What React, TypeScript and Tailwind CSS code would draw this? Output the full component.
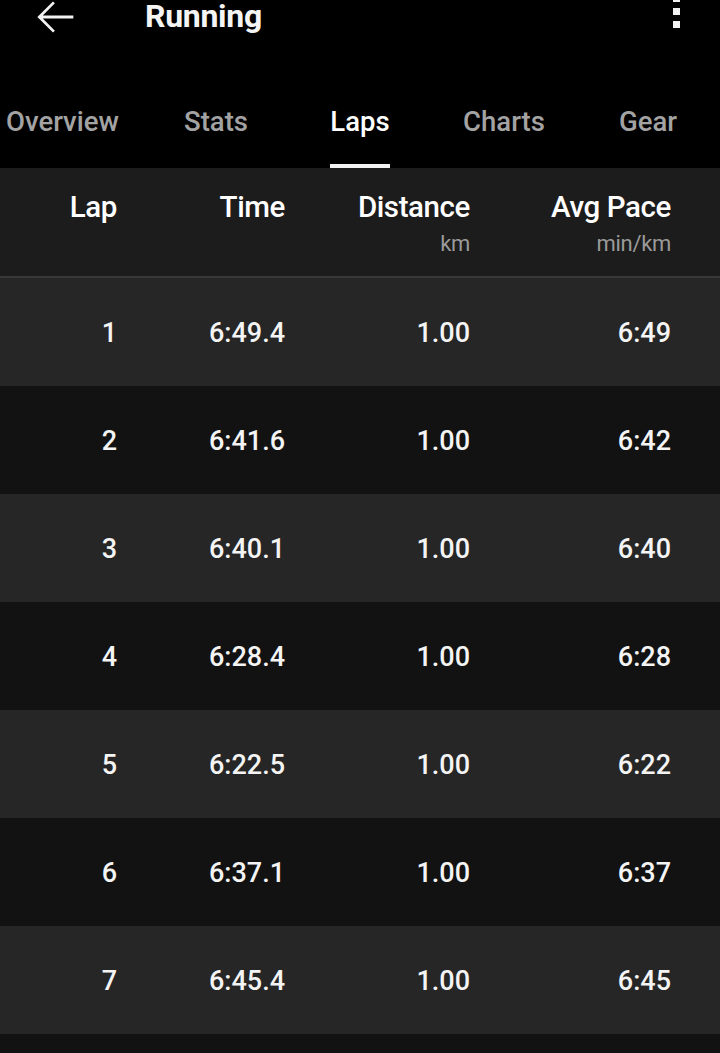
import React from 'react';

type Lap = { lap: number; time: string; distance: string; pace: string };

const laps: Lap[] = [
  { lap: 1, time: '6:49.4', distance: '1.00', pace: '6:49' },
  { lap: 2, time: '6:41.6', distance: '1.00', pace: '6:42' },
  { lap: 3, time: '6:40.1', distance: '1.00', pace: '6:40' },
  { lap: 4, time: '6:28.4', distance: '1.00', pace: '6:28' },
  { lap: 5, time: '6:22.5', distance: '1.00', pace: '6:22' },
  { lap: 6, time: '6:37.1', distance: '1.00', pace: '6:37' },
  { lap: 7, time: '6:45.4', distance: '1.00', pace: '6:45' },
];

const tabs = ['Overview', 'Stats', 'Laps', 'Charts', 'Gear'];

const font = { fontFamily: 'Roboto, "Noto Sans", sans-serif' };

const cols = 'grid grid-cols-[117px_168px_185px_201px]';

const ArrowBack = () => (
  <svg width="52" height="52" viewBox="0 0 24 24" className="shrink-0">
    <path
      d="M20 11.3H5.9l5.6-5.6L10.6 4.8 3.4 12l7.2 7.2.9-.9-5.6-5.6H20z"
      fill="#f2f2f2"
    />
  </svg>
);

const Kebab = () => (
  <div className="flex flex-col gap-[6px] items-center -mt-[10px]">
    <span className="block w-[7px] h-[7px] bg-[#f2f2f2]" />
    <span className="block w-[7px] h-[7px] bg-[#f2f2f2]" />
    <span className="block w-[7px] h-[7px] bg-[#f2f2f2]" />
  </div>
);

export default function App() {
  return (
    <div className="w-[720px] h-[1053px] overflow-hidden bg-black text-white" style={font}>
      {/* top bar */}
      <div className="h-[33px] flex items-center">
        <div className="ml-[30px] w-[52px] flex items-center justify-center">
          <ArrowBack />
        </div>
        <div className="ml-[63px] text-[32px] font-bold leading-[33px] text-[#f4f4f4] tracking-[-0.3px]">
          Running
        </div>
        <div className="ml-auto mr-[40px]">
          <Kebab />
        </div>
      </div>

      {/* tabs */}
      <div className="h-[135px] grid grid-cols-5 items-end">
        {tabs.map((t, i) => {
          const active = t === 'Laps';
          return (
            <div
              key={t}
              className={
                'flex flex-col ' + (i === 0 ? 'items-start pl-[6px]' : 'items-center')
              }
            >
              <div className="flex flex-col items-stretch">
                <span
                  className={
                    'text-[27.5px] font-medium leading-[32px] pt-[1px] ' +
                    (active ? 'text-white' : 'text-[#a3a3a3]')
                  }
                >
                  {t}
                </span>
                <span
                  className={
                    'mt-[26px] h-[4px] ' + (active ? 'bg-[#f2f2f2]' : 'bg-transparent')
                  }
                />
              </div>
            </div>
          );
        })}
      </div>

      {/* table header */}
      <div className="h-[108px] bg-[#1c1c1c] border-b-2 border-[#383838] box-content">
        <div className={cols + ' pt-[23px] text-right'}>
          <div className="text-[29.5px] font-medium leading-[32px] tracking-[-0.4px]">Lap</div>
          <div className="text-[29.5px] font-medium leading-[32px] tracking-[-0.4px]">Time</div>
          <div className="flex flex-col items-end">
            <span className="text-[29.5px] font-medium leading-[32px] tracking-[-0.4px]">Distance</span>
            <span className="mt-[9px] text-[22px] leading-[24px] text-[#9a9a9a] tracking-[-0.3px]">km</span>
          </div>
          <div className="flex flex-col items-end">
            <span className="text-[29.5px] font-medium leading-[32px] tracking-[-0.4px]">Avg Pace</span>
            <span className="mt-[9px] text-[22px] leading-[24px] text-[#9a9a9a] tracking-[-0.3px]">min/km</span>
          </div>
        </div>
      </div>

      {/* rows */}
      {laps.map((l, i) => (
        <div
          key={l.lap}
          className={
            cols +
            ' h-[108px] items-center pt-[3px] text-right text-[27px] font-medium text-[#f4f4f4] ' +
            (i % 2 === 0 ? 'bg-[#262626]' : 'bg-[#121212]')
          }
        >
          <div>{l.lap}</div>
          <div>{l.time}</div>
          <div>{l.distance}</div>
          <div>{l.pace}</div>
        </div>
      ))}
      {/* next row, scrolled out of view */}
      <div className="h-[108px] bg-[#121212]" />
    </div>
  );
}
